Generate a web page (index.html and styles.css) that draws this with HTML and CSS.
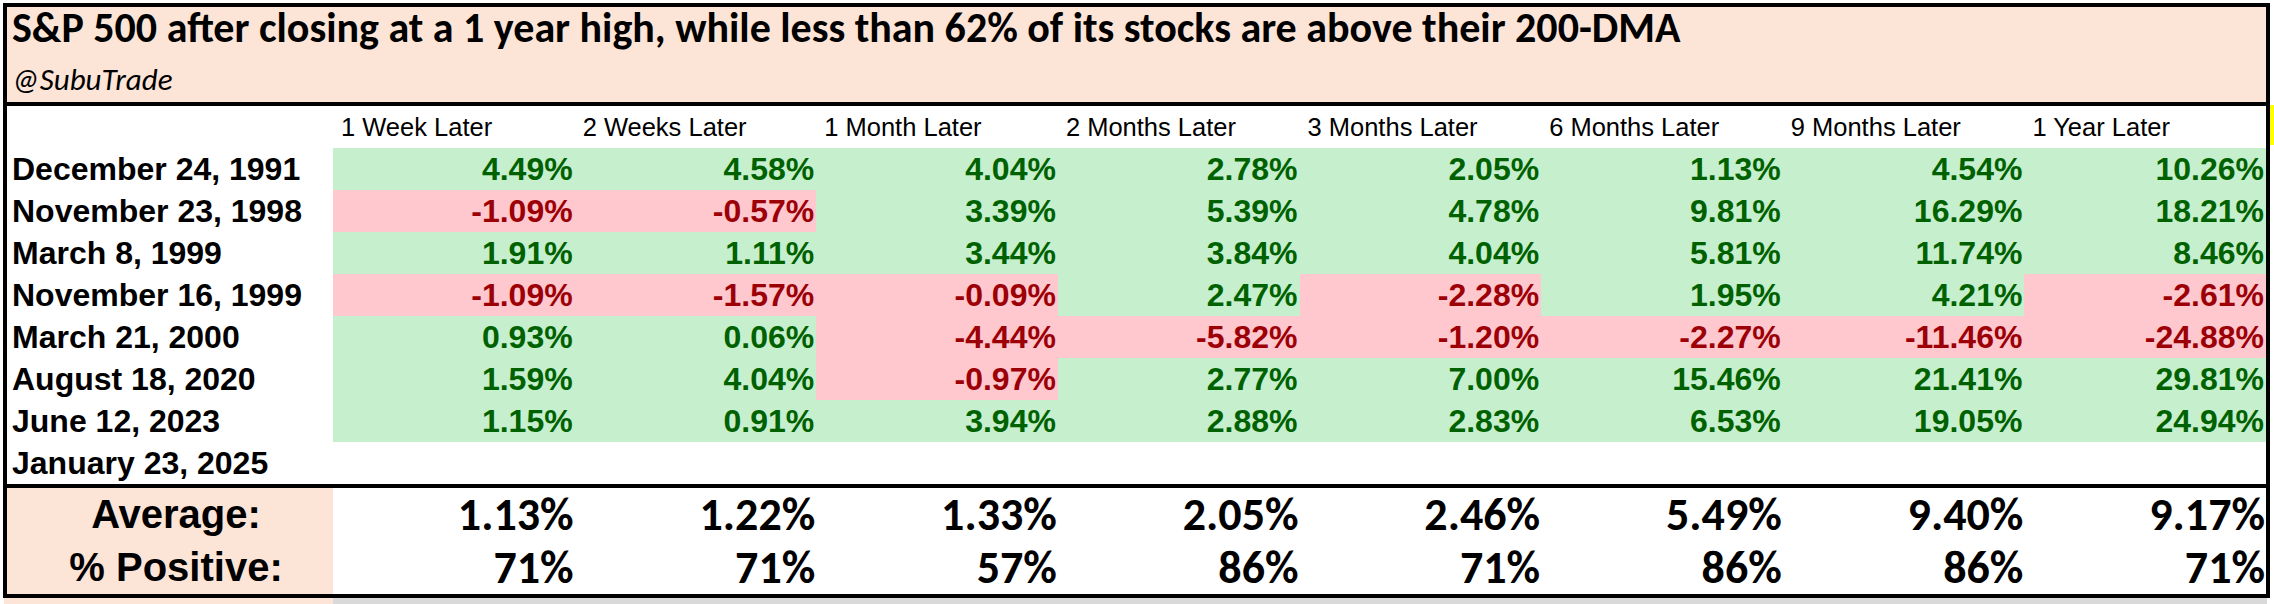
FILE: index.html
```html
<!DOCTYPE html>
<html lang="en">
<head>
<meta charset="utf-8">
<title>S&amp;P 500 after closing at a 1 year high</title>
<link rel="stylesheet" href="styles.css">
</head>
<body>
<div class="page">
  <div class="frame">
    <div class="sheet">
      <div class="banner">
        <div class="title">S&amp;P 500 after closing at a 1 year high, while less than 62% of its stocks are above their 200-DMA</div>
        <div class="handle">@SubuTrade</div>
      </div>
      <div class="grid">
        <div class="hd"></div>
        <div class="hd">1 Week Later</div>
        <div class="hd">2 Weeks Later</div>
        <div class="hd">1 Month Later</div>
        <div class="hd">2 Months Later</div>
        <div class="hd">3 Months Later</div>
        <div class="hd">6 Months Later</div>
        <div class="hd">9 Months Later</div>
        <div class="hd">1 Year Later</div>

        <div class="lbl">December 24, 1991</div>
        <div class="v g">4.49%</div><div class="v g">4.58%</div><div class="v g">4.04%</div><div class="v g">2.78%</div><div class="v g">2.05%</div><div class="v g">1.13%</div><div class="v g">4.54%</div><div class="v g">10.26%</div>

        <div class="lbl">November 23, 1998</div>
        <div class="v r">-1.09%</div><div class="v r">-0.57%</div><div class="v g">3.39%</div><div class="v g">5.39%</div><div class="v g">4.78%</div><div class="v g">9.81%</div><div class="v g">16.29%</div><div class="v g">18.21%</div>

        <div class="lbl">March 8, 1999</div>
        <div class="v g">1.91%</div><div class="v g">1.11%</div><div class="v g">3.44%</div><div class="v g">3.84%</div><div class="v g">4.04%</div><div class="v g">5.81%</div><div class="v g">11.74%</div><div class="v g">8.46%</div>

        <div class="lbl">November 16, 1999</div>
        <div class="v r">-1.09%</div><div class="v r">-1.57%</div><div class="v r">-0.09%</div><div class="v g">2.47%</div><div class="v r">-2.28%</div><div class="v g">1.95%</div><div class="v g">4.21%</div><div class="v r">-2.61%</div>

        <div class="lbl">March 21, 2000</div>
        <div class="v g">0.93%</div><div class="v g">0.06%</div><div class="v r">-4.44%</div><div class="v r">-5.82%</div><div class="v r">-1.20%</div><div class="v r">-2.27%</div><div class="v r">-11.46%</div><div class="v r">-24.88%</div>

        <div class="lbl">August 18, 2020</div>
        <div class="v g">1.59%</div><div class="v g">4.04%</div><div class="v r">-0.97%</div><div class="v g">2.77%</div><div class="v g">7.00%</div><div class="v g">15.46%</div><div class="v g">21.41%</div><div class="v g">29.81%</div>

        <div class="lbl">June 12, 2023</div>
        <div class="v g">1.15%</div><div class="v g">0.91%</div><div class="v g">3.94%</div><div class="v g">2.88%</div><div class="v g">2.83%</div><div class="v g">6.53%</div><div class="v g">19.05%</div><div class="v g">24.94%</div>

        <div class="lbl">January 23, 2025</div>
        <div class="v"></div><div class="v"></div><div class="v"></div><div class="v"></div><div class="v"></div><div class="v"></div><div class="v"></div><div class="v"></div>
      </div>
      <div class="grid summary">
        <div class="slbl">Average:</div>
        <div class="sv">1.13%</div><div class="sv">1.22%</div><div class="sv">1.33%</div><div class="sv">2.05%</div><div class="sv">2.46%</div><div class="sv">5.49%</div><div class="sv">9.40%</div><div class="sv">9.17%</div>
        <div class="slbl">% Positive:</div>
        <div class="sv">71%</div><div class="sv">71%</div><div class="sv">57%</div><div class="sv">86%</div><div class="sv">71%</div><div class="sv">86%</div><div class="sv">86%</div><div class="sv">71%</div>
      </div>
    </div>
    <div class="tick"></div>
  </div>
  <div class="strip">
    <div class="strip-peach"></div>
    <div class="strip-gray"></div>
  </div>
</div>
</body>
</html>
```

FILE: styles.css
```css
* { box-sizing: border-box; }
html, body { margin: 0; padding: 0; background: #ffffff; }
body { width: 2274px; height: 604px; overflow: hidden; }

.page { padding: 3px 0 0 3px; }

.frame { display: flex; align-items: flex-start; }

.sheet {
  width: 2267px;
  border: 4px solid #000;
  background: #fff;
}

.tick {
  width: 4px;
  height: 40px;
  margin-top: 102px;
  background: #ffff00;
}

.banner {
  background: #fce4d6;
  height: 99px;
  border-bottom: 4px solid #000;
  padding: 1px 0 0 5px;
}

.title {
  font-family: Carlito, Calibri, Lato, sans-serif;
  font-weight: 700;
  font-size: 42px;
  line-height: 40px;
  color: #000;
  white-space: nowrap;
}

.handle {
  font-family: Carlito, Calibri, Lato, sans-serif;
  font-style: italic;
  font-size: 31px;
  line-height: 34px;
  margin-top: 14px;
  color: #000;
}

.grid {
  display: grid;
  grid-template-columns: 326px repeat(8, 1fr);
  grid-auto-rows: 42px;
}

.hd {
  height: 40px;
  font-family: "Liberation Sans", Arial, sans-serif;
  font-size: 25.5px;
  line-height: 42px;
  padding-left: 8px;
  color: #000;
  white-space: nowrap;
}

.lbl {
  font-family: "Liberation Sans", Arial, sans-serif;
  font-weight: 700;
  font-size: 32px;
  line-height: 42px;
  padding-left: 5px;
  color: #000;
  white-space: nowrap;
}

.v {
  font-family: "Liberation Sans", Arial, sans-serif;
  font-weight: 700;
  font-size: 32px;
  line-height: 42px;
  text-align: right;
  padding-right: 2px;
  white-space: nowrap;
}

.v.g { background: #c6efce; color: #006100; }
.v.r { background: #ffc7ce; color: #9c0006; }

.summary {
  border-top: 4px solid #000;
  grid-auto-rows: 53px;
}

.slbl {
  background: #fce4d6;
  font-family: "Liberation Sans", Arial, sans-serif;
  font-weight: 700;
  font-size: 40px;
  line-height: 53px;
  text-align: center;
  padding-left: 12px;
  color: #000;
  white-space: nowrap;
}

.sv {
  font-family: Carlito, Calibri, Lato, sans-serif;
  font-weight: 700;
  font-size: 46px;
  line-height: 53px;
  text-align: right;
  padding-right: 1px;
  color: #000;
  white-space: nowrap;
}

.strip { display: flex; height: 7px; padding-left: 1px; }
.strip-peach { width: 329px; background: #fce4d6; }
.strip-gray { width: 1934px; background: #d9d9d9; }
```
